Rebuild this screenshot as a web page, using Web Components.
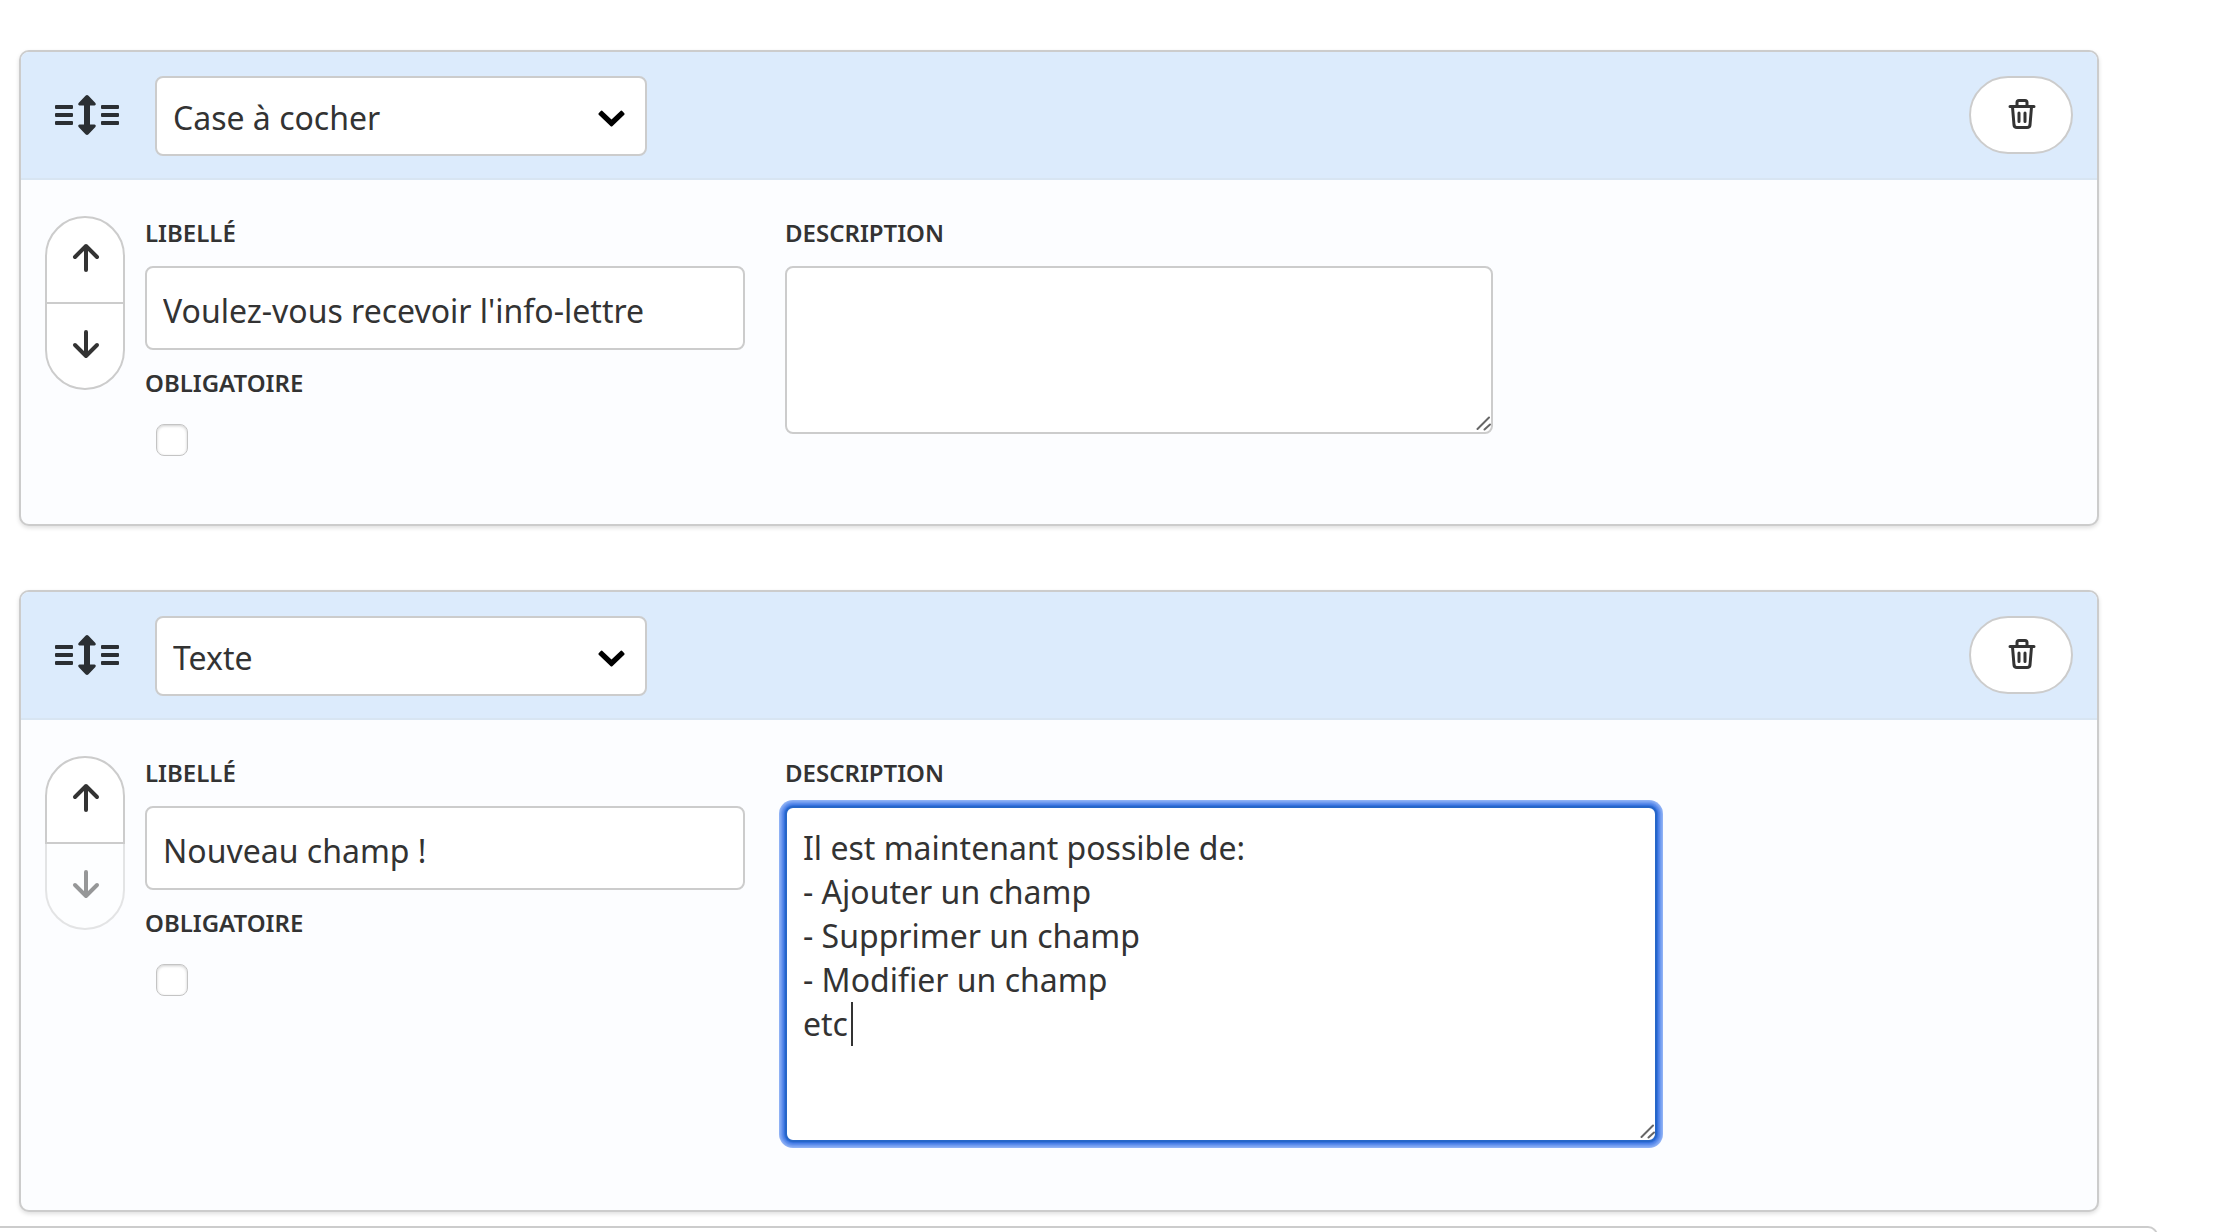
<!DOCTYPE html>
<html lang="fr">
<head>
<meta charset="utf-8">
<title>Champs du formulaire</title>
<style>
html, body { margin: 0; height: 100%; }
body { background: #fff; color: #333; font: 32px/44px "Noto Sans", sans-serif; overflow: hidden; }
</style>
</head>
<body>
<champ-liste>
  <champ-bloc type="Case à cocher" libelle="Voulez-vous recevoir l'info-lettre"></champ-bloc>
  <champ-bloc type="Texte" libelle="Nouveau champ !" dernier actif>Il est maintenant possible de:
- Ajouter un champ
- Supprimer un champ
- Modifier un champ
etc</champ-bloc>
</champ-liste>
<script>
const base = `*{box-sizing:border-box}button,input,select,textarea{font:inherit;color:inherit;margin:0}svg{display:block}`;
const define = (name, html, setup) => customElements.define(name, class extends HTMLElement {
  connectedCallback() {
    if (this.shadowRoot) return;
    const root = this.attachShadow({ mode: 'open' });
    root.innerHTML = html;
    if (setup) setup(this, root);
  }
});

define('champ-liste', `<style>${base}
:host{display:block;padding-top:50px}
.cartes{display:flex;flex-direction:column;gap:64px;margin:0 115px 14px 19px}
.suite{height:64px;margin-right:56px;border:solid #ccc;border-width:2px 2px 0 0;border-radius:0 10px 0 0}
</style><div class="cartes"><slot></slot></div><div class="suite"></div>`);

define('champ-deplacer', `<style>${base}
:host{display:flex;flex-direction:column;flex:none;width:80px}
button{height:88px;display:grid;place-items:center;padding:0 0 4px 2px;border:2px solid #ccc;background:#fff;color:#333}
.haut{border-radius:40px 40px 0 0;position:relative;z-index:1}
.bas{border-radius:0 0 40px 40px;margin-top:-2px}
button:disabled{opacity:.5}
</style>
<button class="haut" aria-label="Monter"><svg width="28" height="30" viewBox="0 0 28 30" fill="none" stroke="currentColor" stroke-width="4" stroke-linecap="round" stroke-linejoin="round"><path d="M14 27V3M3 14 14 3 25 14"/></svg></button>
<button class="bas" aria-label="Descendre"><svg width="28" height="30" viewBox="0 0 28 30" fill="none" stroke="currentColor" stroke-width="4" stroke-linecap="round" stroke-linejoin="round"><path d="M14 3V27M3 16 14 27 25 16"/></svg></button>`,
(el, root) => { root.querySelector('.bas').disabled = el.hasAttribute('bas-inactif'); });

define('champ-type', `<style>${base}
:host{display:block;position:relative;flex:0 1 492px}
select{appearance:none;display:block;width:100%;height:80px;padding:4px 60px 0 16px;border:2px solid #ccc;border-radius:8px;background:#fff}
svg{position:absolute;right:22px;top:34px;pointer-events:none}
</style><select aria-label="Type de champ"><option></option></select>
<svg width="27" height="17" viewBox="0 0 27 17"><path d="M4.2.8 13.500 9.600 22.800.8Q23.500.3 24.200.9L26.300 3.200Q27 4 26.300 4.800L14.300 16.200Q13.500 16.900 12.700 16.200L.7 4.800Q0 4 .7 3.200L2.800.9Q3.500.3 4.200.8Z" fill="#000"/></svg>`,
(el, root) => { root.querySelector('option').textContent = el.getAttribute('valeur'); });

define('champ-description', `<style>${base}
:host{display:block;flex:0 1 708px;min-width:0}
:host([actif]){flex-basis:872px}
label{display:block;font-size:24px;line-height:34px;font-weight:600;margin-bottom:16px}
.zone{position:relative}
textarea{display:block;width:100%;height:168px;padding:18px 16px;border:2px solid #ccc;border-radius:8px;background:#fff;resize:none;outline:none;overflow:hidden}
:host([actif]) textarea{height:336px;border-color:#2666c8;box-shadow:0 0 0 1px #3570dc,0 0 0 2px #4a80e6,0 0 0 3px #5b8bea,0 0 0 4px #6e9aef,0 0 0 5px #7ea5f2,0 0 0 6px #8eb1f5}
.poignee{position:absolute;right:2px;bottom:3px}
.curseur{display:none;position:absolute;left:66px;top:196px;width:2px;height:44px;background:#333}
:host([actif]) .curseur{display:block}
</style>
<label for="d">DESCRIPTION</label>
<div class="zone"><textarea id="d" spellcheck="false"></textarea><span class="curseur"></span>
<svg class="poignee" width="15" height="15" viewBox="0 0 15 15" stroke="#666" stroke-width="2" stroke-linecap="round"><path d="M1.500 13 13 1.500M8.500 13.500 14 8.500"/></svg></div>`,
(el, root) => { root.querySelector('textarea').value = el.getAttribute('valeur'); });

define('champ-bloc', `<style>${base}
:host{display:block;border:2px solid #ccc;border-radius:10px;background:#fcfdff;box-shadow:0 2px 4px rgba(0,0,0,.13)}
header{display:flex;align-items:flex-start;padding:24px;background:#dcebfc;border-bottom:2px solid #d8e5f2;border-radius:8px 8px 0 0;height:128px}
.glisser{flex:none;margin:19px 36px 0 10px}
.supprimer{flex:none;margin-left:auto;width:104px;height:78px;padding:0 0 3px 2px;border:2px solid #ccc;border-radius:39px;background:#fff;display:grid;place-items:center}
.corps{display:flex;align-items:flex-start;padding:36px 24px 68px}
.gauche{flex:0 1 600px;min-width:0;margin:0 40px 0 20px}
label{display:block;font-size:24px;line-height:34px;font-weight:600;margin-bottom:16px}
.texte{display:block;width:100%;height:84px;padding:4px 16px 0;border:2px solid #ccc;border-radius:8px;background:#fff;outline:none;margin-bottom:16px}
.case{appearance:none;display:block;width:32px;height:32px;margin:24px 0 0 11px;border:1px solid #c4c4c4;border-radius:8px;background:#fff;box-shadow:inset 0 1px 3px rgba(0,0,0,.2)}
</style>
<header>
<svg class="glisser" width="64" height="40" viewBox="0 0 64 40" fill="#2b2f33"><path d="M1 10H17Q18 10 18 11V13Q18 14 17 14H1Q0 14 0 13V11Q0 10 1 10ZM1 18H17Q18 18 18 19V21Q18 22 17 22H1Q0 22 0 21V19Q0 18 1 18ZM1 26H17Q18 26 18 27V29Q18 30 17 30H1Q0 30 0 29V27Q0 26 1 26ZM47 10H63Q64 10 64 11V13Q64 14 63 14H47Q46 14 46 13V11Q46 10 47 10ZM47 18H63Q64 18 64 19V21Q64 22 63 22H47Q46 22 46 21V19Q46 18 47 18ZM47 26H63Q64 26 64 27V29Q64 30 63 30H47Q46 30 46 29V27Q46 26 47 26Z"/><path d="M30.500 .8Q32-.6 33.500 .8L40.400 8Q41.500 10 39.500 10.500H35V29.500H39.500Q41.500 30 40.400 32L33.500 39.200Q32 40.600 30.500 39.200L23.600 32Q22.500 30 24.500 29.500H29V10.500H24.500Q22.500 10 23.600 8Z"/></svg>
<champ-type></champ-type>
<button class="supprimer" aria-label="Supprimer"><svg width="28" height="32" viewBox="0 0 28 32" fill="none" stroke="#333" stroke-width="3" stroke-linecap="round" stroke-linejoin="round"><path d="M2 8.500H26M9 8V4.500Q9 2.500 11 2.500H17Q19 2.500 19 4.500V8M4.500 9 6 27Q6.300 29.500 9 29.500H19Q21.700 29.500 22 27L23.500 9M11 15V23.500M17 15V23.500"/></svg></button>
</header>
<div class="corps"><champ-deplacer></champ-deplacer>
<div class="gauche"><label for="l">LIBELLÉ</label><input class="texte" id="l" type="text" spellcheck="false"><label for="o">OBLIGATOIRE</label><input class="case" id="o" type="checkbox"></div>
<champ-description></champ-description></div>`,
(el, root) => {
  root.querySelector('#l').value = el.getAttribute('libelle');
  const type = document.createElement('champ-type');
  type.setAttribute('valeur', el.getAttribute('type'));
  root.querySelector('champ-type').replaceWith(type);
  const move = document.createElement('champ-deplacer');
  move.toggleAttribute('bas-inactif', el.hasAttribute('dernier'));
  root.querySelector('champ-deplacer').replaceWith(move);
  const desc = document.createElement('champ-description');
  desc.setAttribute('valeur', el.textContent.trim());
  desc.toggleAttribute('actif', el.hasAttribute('actif'));
  root.querySelector('champ-description').replaceWith(desc);
});
</script>
</body>
</html>
